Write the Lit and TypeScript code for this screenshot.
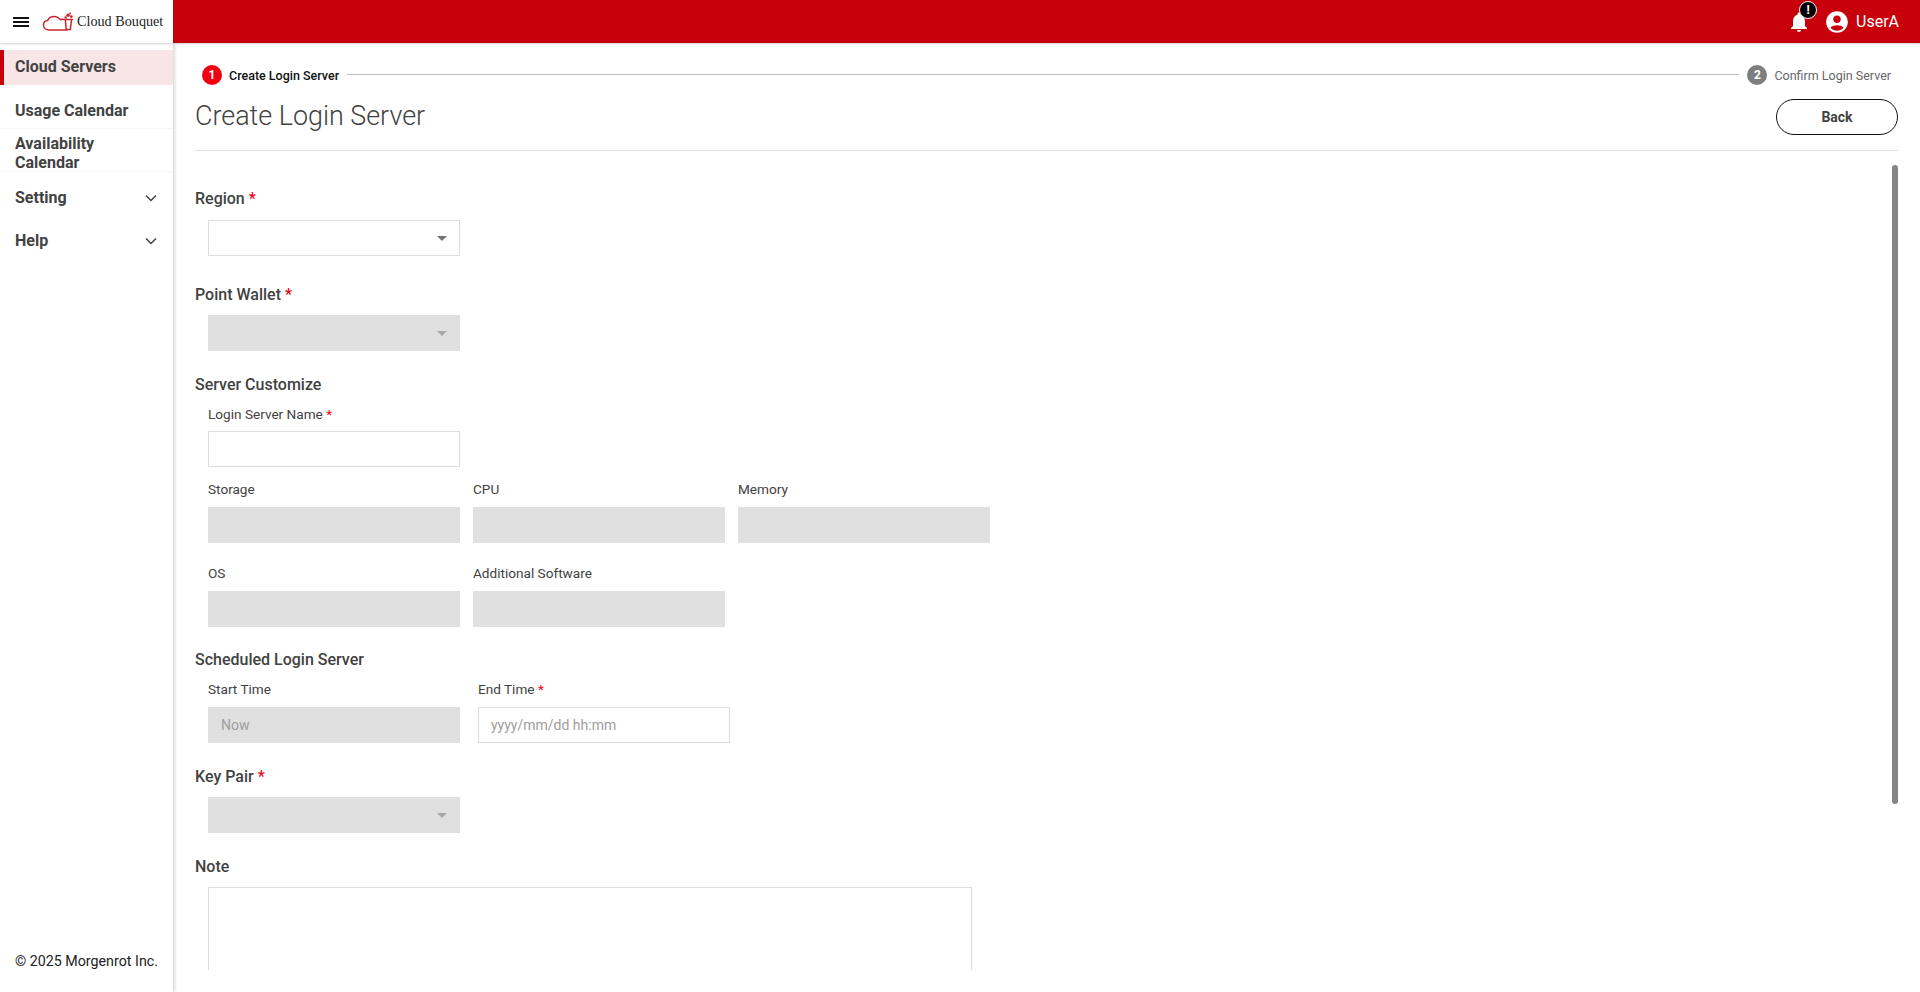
import { LitElement, html, css, svg } from "lit";
import { customElement } from "lit/decorators.js";

const bell = "M12 22c1.1 0 2-.9 2-2h-4c0 1.1.9 2 2 2zm6-6v-5c0-3.07-1.63-5.64-4.5-6.32V4c0-.83-.67-1.5-1.5-1.5s-1.5.67-1.5 1.5v.68C7.64 5.36 6 7.92 6 11v5l-2 2v1h16v-1l-2-2z";
const account = "M12 2C6.48 2 2 6.48 2 12s4.48 10 10 10 10-4.48 10-10S17.52 2 12 2zm0 4c1.93 0 3.5 1.57 3.5 3.5S13.93 13 12 13s-3.5-1.57-3.5-3.5S10.07 6 12 6zm0 14c-2.03 0-4.43-.82-6.14-2.88C7.55 15.8 9.68 15 12 15s4.45.8 6.14 2.12C16.43 19.18 14.03 20 12 20z";

@customElement("app-root")
export class AppRoot extends LitElement {
  static styles = css`
    :host { display: block; width: 1920px; height: 992px; overflow: hidden; background: #fff; font-family: Roboto, "Liberation Sans", sans-serif; color: #424242; }
    .app { display: flex; flex-direction: column; height: 992px; }
    .top { display: flex; height: 43px; flex: none; position: relative; z-index: 3; box-shadow: 0 1px 2px rgba(0,0,0,.18); }
    .brand { width: 173px; flex: none; background: #fff; display: flex; align-items: center; padding-left: 13px; box-sizing: border-box; }
    .burger { width: 16px; height: 10px; display: flex; flex-direction: column; justify-content: space-between; margin-right: 13px; }
    .burger i { display: block; height: 2px; background: #111; }
    .logo { flex: none; margin-right: 3px; }
    .brandname { font-family: "Liberation Serif", serif; font-size: 14.2px; color: #222; white-space: nowrap; }
    .bar { flex: 1; background: #c8000b; display: flex; align-items: center; justify-content: flex-end; padding-right: 21px; color: #fff; }
    .bellwrap { position: relative; width: 24px; height: 24px; margin: 1px 13px 0 0; }
    .bellwrap svg { display: block; }
    .badge { position: absolute; top: -9px; left: 12px; width: 16px; height: 16px; border-radius: 50%; background: #000; border: 1px solid #fff; color: #fff; font: 700 12px/16px Roboto, sans-serif; text-align: center; }
    .user { display: block; margin-right: 6px; }
    .uname { font-size: 16px; }
    .body { flex: 1; display: flex; min-height: 0; }
    .side { width: 173px; flex: none; box-sizing: border-box; padding-top: 7px; display: flex; flex-direction: column; box-shadow: 1px 0 4px rgba(0,0,0,.22); position: relative; z-index: 2; font-weight: 700; font-size: 16px; line-height: 19px; }
    .item { display: flex; align-items: center; justify-content: space-between; padding: 0 16px 0 15px; box-sizing: border-box; }
    .item.on { height: 35px; background: #f8e5e7; border-left: 4px solid #c8000b; padding: 0 0 2px 11px; }
    .item.a { height: 44px; padding-top: 7px; border-bottom: 1px solid #f7f7f7; }
    .item.b { height: 43px; padding-top: 5px; border-bottom: 1px solid #f7f7f7; }
    .item.c { height: 47px; padding-top: 4px; }
    .item.d { height: 43px; }
    .item svg { flex: none; }
    .copy { margin-top: auto; padding: 0 0 21px 15px; font-weight: 400; font-size: 14.25px; line-height: 20px; color: #222; }
    .main { flex: 1; min-width: 0; display: flex; flex-direction: column; padding: 22px; box-sizing: border-box; position: relative; }
    .stepper { display: flex; align-items: center; padding: 0 7px; height: 20px; font-size: 12.5px; }
    .num { width: 20px; height: 20px; border-radius: 50%; color: #fff; font-weight: 700; font-size: 12px; line-height: 20px; text-align: center; flex: none; margin-right: 7px; }
    .num.r { background: #f00010; }
    .num.g { background: #7f7f7f; }
    .st1 { color: #111; font-weight: 500; }
    .st2 { color: #666; }
    .line { flex: 1; height: 1px; background: #bdbdbd; margin: -1px 8px 0; }
    .head { display: flex; align-items: center; justify-content: space-between; height: 36px; margin-top: 14px; padding-bottom: 15px; border-bottom: 1px solid #e0e0e0; flex: none; }
    h1 { margin: 0 0 2px; font-weight: 300; font-size: 26.9px; line-height: 34px; color: #424242; }
    .back { width: 122px; height: 36px; box-sizing: border-box; border: 1.5px solid #111; border-radius: 18px; background: #fff; font: 700 14px Roboto, sans-serif; color: #424242; padding: 0; }
    .form { flex: 1; min-height: 0; overflow: hidden; padding-top: 38px; box-sizing: border-box; }
    .h { font-weight: 500; font-size: 16px; line-height: 20px; color: #424242; }
    .req { color: #f00010; }
    .l { font-size: 13.6px; line-height: 20px; color: #424242; margin-bottom: 8px; }
    .first .l { margin-bottom: 7px; }
    .ctl { width: 252px; height: 36px; box-sizing: border-box; border: 1px solid #dedede; background: #fff; display: flex; align-items: center; justify-content: flex-end; padding: 0 12px; font-size: 14px; }
    .ctl.dis { background: #e0e0e0; border-color: #e0e0e0; }
    .ctl.txt { justify-content: flex-start; color: #9e9e9e; }
    .arrow { width: 0; height: 0; border-left: 5px solid transparent; border-right: 5px solid transparent; border-top: 5px solid #757575; }
    .dis .arrow { border-top-color: #a8a8a8; }
    .in { margin-left: 13px; }
    .s1 { margin-top: 11px; }
    .wallet { margin-top: 29px; }
    .sc { margin-top: 24px; }
    .sched { margin-top: 23px; }
    .row { display: flex; gap: 13px; }
    .row.w { gap: 18px; }
    .gap12 { margin-top: 12px; }
    .gap20 { margin-top: 20px; }
    .gap10 { margin-top: 10px; }
    .gap9 { margin-top: 9px; }
    .area { width: 764px; height: 200px; box-sizing: border-box; border: 1px solid #dedede; }
    .thumb { position: absolute; right: 22px; top: 122px; width: 6px; height: 639px; background: #858585; border-radius: 3px; }
  `;

  private chev() {
    return html`<svg width="12" height="8" viewBox="0 0 12 8"><path d="M1 1.5l5 5 5-5" fill="none" stroke="#424242" stroke-width="1.5"/></svg>`;
  }

  private logo() {
    return html`<svg class="logo" width="32" height="22" viewBox="0 0 32 22" fill="none">
      ${svg`<path d="M25 19H7C3.5 19 1.5 16.5 1.5 14c0-2.6 1.8-4.4 4.2-4.6C6.8 7 9 5.5 12 5.5c3 0 5 1.3 6.3 3.2 1-.4 2-.5 3.2-.3" stroke="#c9272f" stroke-width="1.5" stroke-linecap="round" stroke-linejoin="round"/>
      <path d="M22.5 8.5h8M23.3 8.8l1 9.8h4l1.2-9.8" stroke="#c9272f" stroke-width="1.5" stroke-linecap="round" stroke-linejoin="round"/>
      <circle cx="26" cy="4.2" r="1.7" fill="#c9272f"/><circle cx="29.3" cy="5.6" r="1.4" fill="#c9272f"/><circle cx="23.6" cy="6.4" r="1.2" fill="#c9272f"/><circle cx="28" cy="2.4" r="1" fill="#c9272f"/>`}
    </svg>`;
  }

  private field(label: unknown, extra = "", content: unknown = "") {
    return html`<div><div class="l">${label}</div><div class="ctl ${extra}">${content}</div></div>`;
  }

  render() {
    const star = html`<span class="req">*</span>`;
    const arrow = html`<span class="arrow"></span>`;
    return html`<div class="app">
      <div class="top">
        <div class="brand">
          <div class="burger"><i></i><i></i><i></i></div>
          ${this.logo()}
          <span class="brandname">Cloud Bouquet</span>
        </div>
        <div class="bar">
          <div class="bellwrap">
            <svg width="24" height="24" viewBox="0 0 24 24"><path d=${bell} fill="#fff"/></svg>
            <span class="badge">!</span>
          </div>
          <svg class="user" width="26" height="26" viewBox="0 0 24 24"><path d=${account} fill="#fff"/></svg>
          <span class="uname">UserA</span>
        </div>
      </div>
      <div class="body">
        <nav class="side">
          <div class="item on">Cloud Servers</div>
          <div class="item a">Usage Calendar</div>
          <div class="item b">Availability<br />Calendar</div>
          <div class="item c">Setting ${this.chev()}</div>
          <div class="item d">Help ${this.chev()}</div>
          <div class="copy">© 2025 Morgenrot Inc.</div>
        </nav>
        <main class="main">
          <div class="stepper">
            <span class="num r">1</span><span class="st1">Create Login Server</span>
            <span class="line"></span>
            <span class="num g">2</span><span class="st2">Confirm Login Server</span>
          </div>
          <div class="head">
            <h1>Create Login Server</h1>
            <button class="back">Back</button>
          </div>
          <div class="form">
            <div class="h">Region ${star}</div>
            <div class="in s1"><div class="ctl">${arrow}</div></div>
            <div class="h wallet">Point Wallet ${star}</div>
            <div class="in gap10"><div class="ctl dis">${arrow}</div></div>
            <div class="h sc">Server Customize</div>
            <div class="in gap9">
              <div class="first">${this.field(html`Login Server Name ${star}`)}</div>
              <div class="row gap12">
                ${this.field("Storage", "dis")}${this.field("CPU", "dis")}${this.field("Memory", "dis")}
              </div>
              <div class="row gap20">
                ${this.field("OS", "dis")}${this.field("Additional Software", "dis")}
              </div>
            </div>
            <div class="h sched">Scheduled Login Server</div>
            <div class="in gap9 row w">
              ${this.field("Start Time", "dis txt", "Now")}
              ${this.field(html`End Time ${star}`, "txt", "yyyy/mm/dd hh:mm")}
            </div>
            <div class="h sc">Key Pair ${star}</div>
            <div class="in gap10"><div class="ctl dis">${arrow}</div></div>
            <div class="h sc">Note</div>
            <div class="in gap10"><div class="area"></div></div>
          </div>
          <div class="thumb"></div>
        </main>
      </div>
    </div>`;
  }
}
